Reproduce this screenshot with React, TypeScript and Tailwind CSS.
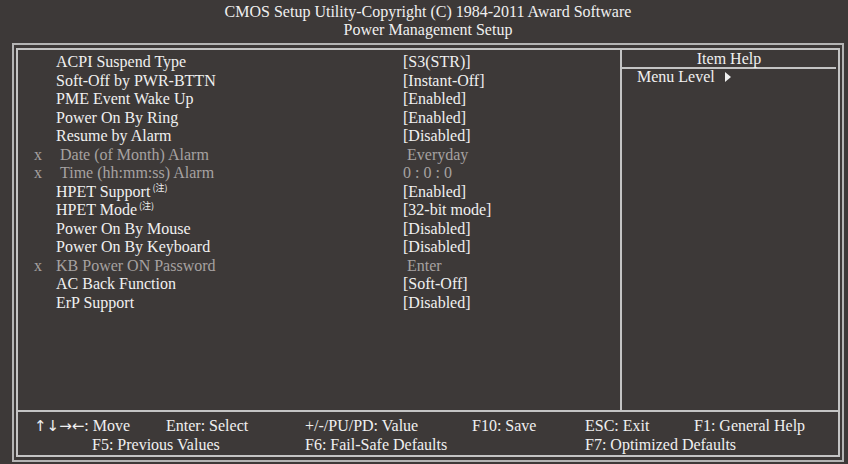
import React from 'react';

interface Row {
  label: string;
  value: string;
  disabled?: boolean;
  note?: boolean;
  labelIndent?: string;
  valueIndent?: string;
}

const rows: Row[] = [
  { label: 'ACPI Suspend Type', value: '[S3(STR)]' },
  { label: 'Soft-Off by PWR-BTTN', value: '[Instant-Off]' },
  { label: 'PME Event Wake Up', value: '[Enabled]' },
  { label: 'Power On By Ring', value: '[Enabled]' },
  { label: 'Resume by Alarm', value: '[Disabled]' },
  { label: 'Date (of Month) Alarm', value: 'Everyday', disabled: true, labelIndent: 'pl-[4px]', valueIndent: 'pl-[4px]' },
  { label: 'Time (hh:mm:ss) Alarm', value: '0 : 0 : 0', disabled: true, labelIndent: 'pl-[4px]' },
  { label: 'HPET Support', value: '[Enabled]', note: true },
  { label: 'HPET Mode', value: '[32-bit mode]', note: true },
  { label: 'Power On By Mouse', value: '[Disabled]' },
  { label: 'Power On By Keyboard', value: '[Disabled]' },
  { label: 'KB Power ON Password', value: 'Enter', disabled: true, valueIndent: 'pl-[4px]' },
  { label: 'AC Back Function', value: '[Soft-Off]' },
  { label: 'ErP Support', value: '[Disabled]' },
];

function Note() {
  return (
    <span className="relative top-[-6px] ml-[2px] text-[9px] font-['Noto_Sans_CJK_SC','Liberation_Serif',serif] leading-none">
      (注)
    </span>
  );
}

export default function App() {
  return (
    <div className="w-[848px] h-[464px] overflow-hidden bg-[#3d3938] text-[#f0f0f0] font-['Liberation_Serif','Times_New_Roman',serif] text-[16px]">
      {/* Title */}
      <div className="ml-[12px] w-[832px] pt-[3px] text-center leading-[18px]">
        <div>CMOS Setup Utility-Copyright (C) 1984-2011 Award Software</div>
        <div>Power Management Setup</div>
      </div>

      {/* Double frame */}
      <div className="mt-[4px] ml-[12px] w-[832px] h-[419px] border-2 border-[#b4b4b4] px-[2px] py-[3px]">
        <div className="h-full border-2 border-[#c4c4c4] flex flex-col">
          <div className="flex h-[362px] border-b-2 border-[#c4c4c4]">
            {/* Settings list */}
            <div className="w-[604px] border-r-2 border-[#c4c4c4] pt-[3px]">
              {rows.map((row) => (
                <div
                  key={row.label}
                  className={`flex h-[18.5px] leading-[18.5px] whitespace-nowrap ${row.disabled ? 'text-[#a6a2a1]' : ''}`}
                >
                  <span className="w-[38px] pl-[16px]">{row.disabled ? 'x' : ''}</span>
                  <span className={`w-[347px] ${row.labelIndent ?? ''}`}>
                    {row.label}
                    {row.note && <Note />}
                  </span>
                  <span className={row.valueIndent ?? ''}>{row.value}</span>
                </div>
              ))}
            </div>

            {/* Item help */}
            <div className="flex-1">
              <div className="h-[19px] border-b-2 border-[#c4c4c4] mr-[2px] text-center leading-[17px]">
                Item Help
              </div>
              <div className="flex items-center pl-[15px] leading-[16px] whitespace-nowrap">
                <span>Menu Level</span>
                <svg className="ml-[10px]" width="6" height="10" viewBox="0 0 6 10">
                  <path d="M0 0 L6 5 L0 10 Z" fill="#f0f0f0" />
                </svg>
              </div>
            </div>
          </div>

          {/* Key legend */}
          <div className="pt-[5px] leading-[18.5px] whitespace-nowrap">
            <div className="flex pl-[16px]">
              <span className="w-[132px]">
                <span className="font-['DejaVu_Sans',sans-serif] text-[15px]">↑↓→←</span>: Move
              </span>
              <span className="w-[139px]">Enter: Select</span>
              <span className="w-[167px]">+/-/PU/PD: Value</span>
              <span className="w-[113px]">F10: Save</span>
              <span className="w-[109px]">ESC: Exit</span>
              <span>F1: General Help</span>
            </div>
            <div className="flex pl-[74px]">
              <span className="w-[213px]">F5: Previous Values</span>
              <span className="w-[280px]">F6: Fail-Safe Defaults</span>
              <span>F7: Optimized Defaults</span>
            </div>
          </div>
        </div>
      </div>
    </div>
  );
}
